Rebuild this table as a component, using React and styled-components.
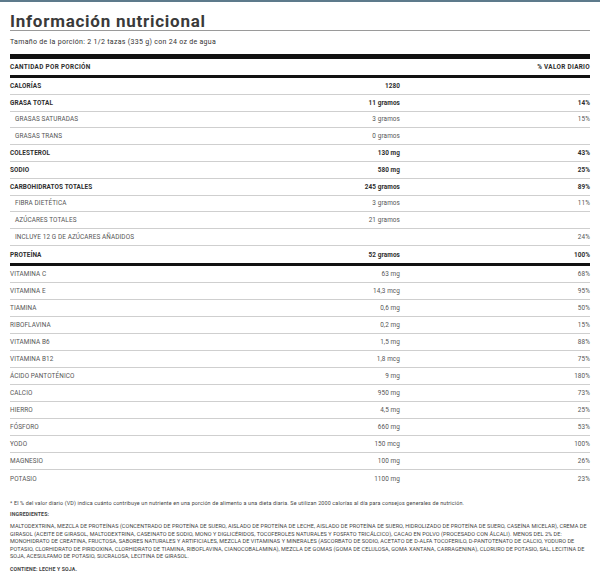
import React from "react";
import styled, { createGlobalStyle } from "styled-components";

const GlobalStyle = createGlobalStyle`
  html, body {
    margin: 0;
    padding: 0;
    background: #ffffff;
  }
  body {
    font-family: Roboto, "Liberation Sans", Arial, sans-serif;
    color: #333333;
  }
`;

const Page = styled.div`
  width: 600px;
  box-sizing: border-box;
  border-top: 2px solid #5d7a8b;
  padding: 10px 10px 0;
`;

const Title = styled.h1`
  margin: 0;
  font-size: 17px;
  line-height: 18px;
  font-weight: 700;
  letter-spacing: 0.75px;
  color: #3a3a3a;
  border-bottom: 1px solid #9a9a9a;
`;

const Serving = styled.p`
  margin: 7px 0 0;
  font-size: 7px;
  line-height: 8px;
  letter-spacing: 0.3px;
  color: #333;
`;

const Table = styled.div`
  margin-top: 8px;
  border-top: 5px solid #111;
`;

const Row = styled.div`
  display: grid;
  grid-template-columns: 1fr 110px 190px;
  align-items: center;
  box-sizing: border-box;
  height: ${(p) => (p.$head ? "19px" : p.$thick ? "20.5px" : p.$tall ? "17px" : "16.8px")};
  border-bottom: ${(p) =>
    p.$thick ? "3px solid #111" : p.$last ? "none" : "1px solid #cfcfcf"};
  font-size: 6.4px;
  line-height: 8px;
  letter-spacing: ${(p) => (p.$head ? "0.3px" : "0.1px")};
  color: ${(p) => (p.$bold ? "#2e2e2e" : "#555")};
  font-weight: ${(p) => (p.$bold ? 700 : 400)};
`;

const Name = styled.span`
  padding-left: ${(p) => (p.$sub ? "5px" : "0")};
  text-transform: uppercase;
`;

const Amount = styled.span`
  text-align: right;
`;

const Pct = styled.span`
  text-align: right;
`;

const Footnote = styled.p`
  margin: 13px 0 0;
  font-size: 5.4px;
  line-height: 7px;
  letter-spacing: 0.15px;
  color: #444;
`;

const Label = styled.p`
  margin: ${(p) => p.$top || "4px"} 0 0;
  font-size: 5.2px;
  line-height: 7px;
  letter-spacing: 0.15px;
  font-weight: 700;
  color: #444;
`;

const Ingredients = styled.p`
  margin: 5px 0 0;
  font-size: 5.5px;
  line-height: 7.5px;
  letter-spacing: 0.07px;
  color: #444;
`;

const main = [
  { name: "Calorías", amount: "1280", pct: "", bold: true },
  { name: "Grasa total", amount: "11 gramos", pct: "14%", bold: true },
  { name: "Grasas saturadas", amount: "3 gramos", pct: "15%", sub: true },
  { name: "Grasas trans", amount: "0 gramos", pct: "", sub: true },
  { name: "Colesterol", amount: "130 mg", pct: "43%", bold: true },
  { name: "Sodio", amount: "580 mg", pct: "25%", bold: true },
  { name: "Carbohidratos totales", amount: "245 gramos", pct: "89%", bold: true },
  { name: "Fibra dietética", amount: "3 gramos", pct: "11%", sub: true },
  { name: "Azúcares totales", amount: "21 gramos", pct: "", sub: true },
  { name: "Incluye 12 g de azúcares añadidos", amount: "", pct: "24%", sub: true },
  { name: "Proteína", amount: "52 gramos", pct: "100%", bold: true, thick: true },
];

const vitamins = [
  ["Vitamina C", "63 mg", "68%"],
  ["Vitamina E", "14,3 mcg", "95%"],
  ["Tiamina", "0,6 mg", "50%"],
  ["Riboflavina", "0,2 mg", "15%"],
  ["Vitamina B6", "1,5 mg", "88%"],
  ["Vitamina B12", "1,8 mcg", "75%"],
  ["Ácido pantoténico", "9 mg", "180%"],
  ["Calcio", "950 mg", "73%"],
  ["Hierro", "4,5 mg", "25%"],
  ["Fósforo", "660 mg", "53%"],
  ["Yodo", "150 mcg", "100%"],
  ["Magnesio", "100 mg", "26%"],
  ["Potasio", "1100 mg", "23%"],
];

const INGREDIENTS =
  "MALTODEXTRINA, MEZCLA DE PROTEÍNAS (CONCENTRADO DE PROTEÍNA DE SUERO, AISLADO DE PROTEÍNA DE LECHE, AISLADO DE PROTEÍNA DE SUERO, HIDROLIZADO DE PROTEÍNA DE SUERO, CASEÍNA MICELAR), CREMA DE GIRASOL (ACEITE DE GIRASOL, MALTODEXTRINA, CASEINATO DE SODIO, MONO Y DIGLICÉRIDOS, TOCOFEROLES NATURALES Y FOSFATO TRICÁLCICO), CACAO EN POLVO (PROCESADO CON ÁLCALI). MENOS DEL 2% DE: MONOHIDRATO DE CREATINA, FRUCTOSA, SABORES NATURALES Y ARTIFICIALES, MEZCLA DE VITAMINAS Y MINERALES (ASCORBATO DE SODIO, ACETATO DE D-ALFA TOCOFERILO, D-PANTOTENATO DE CALCIO, YODURO DE POTASIO, CLORHIDRATO DE PIRIDOXINA, CLORHIDRATO DE TIAMINA, RIBOFLAVINA, CIANOCOBALAMINA), MEZCLA DE GOMAS (GOMA DE CELULOSA, GOMA XANTANA, CARRAGENINA), CLORURO DE POTASIO, SAL, LECITINA DE SOJA, ACESULFAMO DE POTASIO, SUCRALOSA, LECITINA DE GIRASOL.";

export default function App() {
  return (
    <Page>
      <GlobalStyle />
      <Title>Información nutricional</Title>
      <Serving>Tamaño de la porción: 2 1/2 tazas (335 g) con 24 oz de agua</Serving>
      <Table>
        <Row $head $thick $bold>
          <Name>Cantidad por porción</Name>
          <Amount />
          <Pct>% VALOR DIARIO</Pct>
        </Row>
        {main.map((r) => (
          <Row key={r.name} $bold={r.bold} $thick={r.thick}>
            <Name $sub={r.sub}>{r.name}</Name>
            <Amount>{r.amount}</Amount>
            <Pct>{r.pct}</Pct>
          </Row>
        ))}
        {vitamins.map(([name, amount, pct], i) => (
          <Row key={name} $tall $last={i === vitamins.length - 1}>
            <Name>{name}</Name>
            <Amount>{amount}</Amount>
            <Pct>{pct}</Pct>
          </Row>
        ))}
      </Table>
      <Footnote>
        * El % del valor diario (VD) indica cuánto contribuye un nutriente en una porción de
        alimento a una dieta diaria. Se utilizan 2000 calorías al día para consejos generales de
        nutrición.
      </Footnote>
      <Label>INGREDIENTES:</Label>
      <Ingredients>{INGREDIENTS}</Ingredients>
      <Label $top="5px">CONTIENE: LECHE Y SOJA.</Label>
    </Page>
  );
}
